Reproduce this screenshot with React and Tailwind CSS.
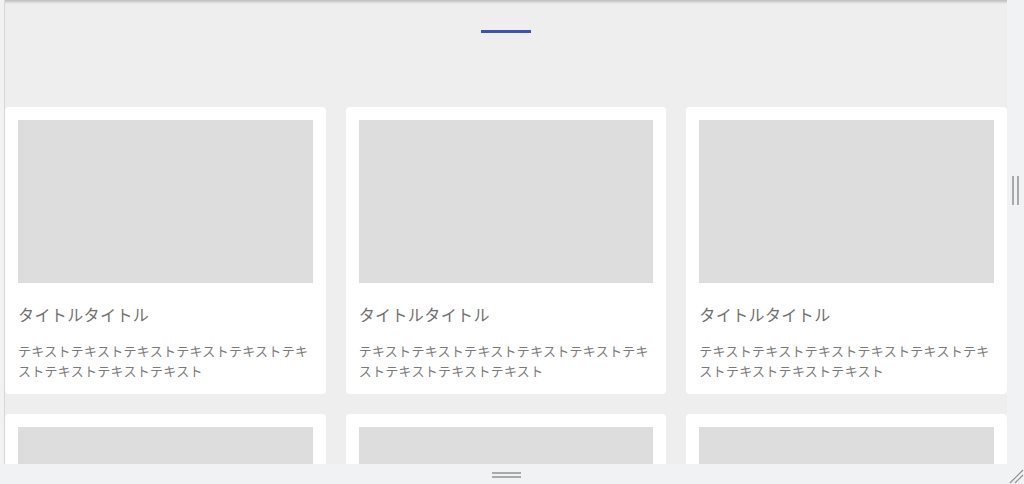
import React from 'react';

const cards = Array.from({ length: 6 }, (_, i) => ({
  id: i,
  title: 'タイトルタイトル',
  body: 'テキストテキストテキストテキストテキストテキストテキストテキストテキスト',
}));

const Card = ({ title, body }) => (
  <div className="bg-white rounded px-[13px] pt-[13px] pb-[14px]">
    <div className="h-[163px] bg-[#dddddd]" />
    <h3 className="mt-[19px] text-[16px] leading-[24px] tracking-[0.4px] text-[#717171] font-normal">{title}</h3>
    <p className="mt-[15px] text-[13px] leading-[19.5px] tracking-[0.28px] text-[#7a7a7a]">{body}</p>
  </div>
);

export default function App() {
  return (
    <div
      className="w-[1024px] h-[484px] overflow-hidden bg-[#f1f2f4] flex flex-col"
      style={{ fontFamily: '"Noto Sans CJK JP", "Noto Sans", sans-serif' }}
    >
      <div className="flex h-[464px]">
        <div className="w-[4px] shrink-0" />
        {/* preview frame */}
        <div className="flex-1 relative overflow-hidden bg-[#eeeeee] border-l border-[#d6d6d6]">
          <div className="absolute inset-x-0 top-0 h-[4px] bg-gradient-to-b from-[#bdbdbd] to-[#eeeeee]" />
          <div className="pt-[30px] flex justify-center">
            <span className="block w-[50px] h-[3px] bg-[#3f51b5]" />
          </div>
          <div className="mt-[74px] grid grid-cols-3 gap-5">
            {cards.map((c) => (
              <Card key={c.id} title={c.title} body={c.body} />
            ))}
          </div>
        </div>
        {/* right resize strip */}
        <div className="w-[17px] shrink-0 flex justify-center gap-[3px] pt-[176px]">
          <span className="block w-[2px] h-[29px] bg-[#a9a9a9]" />
          <span className="block w-[2px] h-[29px] bg-[#a9a9a9]" />
        </div>
      </div>
      {/* bottom resize strip */}
      <div className="h-[20px] flex">
        <div className="w-[5px] shrink-0" />
        <div className="flex-1 flex flex-col items-center gap-[2px] pt-[8px]">
          <span className="block w-[29px] h-[2px] bg-[#a9a9a9]" />
          <span className="block w-[29px] h-[2px] bg-[#a9a9a9]" />
        </div>
        <div className="w-[17px] shrink-0 flex items-end justify-end">
          <svg width="15" height="16" viewBox="0 0 15 16">
            <line x1="1" y1="15" x2="14" y2="2" stroke="#8f8f8f" strokeWidth="1.2" />
            <line x1="6" y1="15" x2="14" y2="7" stroke="#8f8f8f" strokeWidth="1.2" />
          </svg>
        </div>
      </div>
    </div>
  );
}
